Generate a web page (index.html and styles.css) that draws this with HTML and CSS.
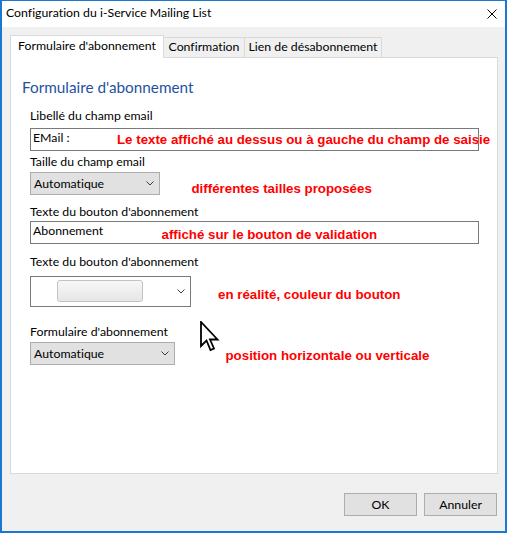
FILE: index.html
```html
<!DOCTYPE html>
<html lang="fr">
<head>
<meta charset="utf-8">
<title>Configuration du i-Service Mailing List</title>
<link rel="stylesheet" href="styles.css">
</head>
<body>
<div class="window">
  <div class="titlebar">
    <span class="title">Configuration du i-Service Mailing List</span>
    <svg class="close" width="10" height="10" viewBox="0 0 10 10"><path d="M0.5 0.5 L9.5 9.5 M9.5 0.5 L0.5 9.5" stroke="#000" stroke-width="1" fill="none"/></svg>
  </div>
  <div class="body">
    <div class="tabs">
      <div class="tab active tab-form">Formulaire d'abonnement</div>
      <div class="tab tab-conf">Confirmation</div>
      <div class="tab tab-lien">Lien de désabonnement</div>
    </div>
    <div class="panel">
      <h1 class="heading">Formulaire d'abonnement</h1>
      <div class="fields">
        <div class="label label-1">Libellé du champ email</div>
        <div class="textbox textbox-1">EMail :</div>
        <div class="label label-2">Taille du champ email</div>
        <div class="select select-1"><span>Automatique</span><svg class="chev" width="8" height="5" viewBox="0 0 8 5"><path d="M0.5 0.5 L4 4 L7.5 0.5" stroke="#3b3b4f" fill="none"/></svg></div>
        <div class="label label-3">Texte du bouton d'abonnement</div>
        <div class="textbox textbox-2">Abonnement</div>
        <div class="label label-4">Texte du bouton d'abonnement</div>
        <div class="combo"><span class="swatch"></span><svg class="chev" width="8" height="5" viewBox="0 0 8 5"><path d="M0.5 0.5 L4 4 L7.5 0.5" stroke="#3b3b4f" fill="none"/></svg></div>
        <div class="label label-5">Formulaire d'abonnement</div>
        <div class="select select-2"><span>Automatique</span><svg class="chev" width="8" height="5" viewBox="0 0 8 5"><path d="M0.5 0.5 L4 4 L7.5 0.5" stroke="#3b3b4f" fill="none"/></svg></div>
      </div>
    </div>
    <div class="footer">
      <button class="btn">OK</button>
      <button class="btn">Annuler</button>
    </div>
  </div>
</div>
<div class="note note-1">Le texte affiché au dessus ou à gauche du champ de saisie</div>
<div class="note note-2">différentes tailles proposées</div>
<div class="note note-3">affiché sur le bouton de validation</div>
<div class="note note-4">en réalité, couleur du bouton</div>
<div class="note note-5">position horizontale ou verticale</div>
<svg class="cursor" width="20" height="31" viewBox="0 0 20 31"><path d="M1 1 L1 25 L6.5 19.5 L10.5 29 L14 27.5 L10 18.5 L17.5 18.5 Z" fill="#fff" stroke="#000" stroke-width="1.8" stroke-linejoin="miter"/></svg>
</body>
</html>
```

FILE: styles.css
```css
html, body {
  margin: 0;
  padding: 0;
}
body {
  position: relative;
  width: 508px;
  height: 533px;
  overflow: hidden;
  background: #ffffff;
  font-family: Lato, "Noto Sans", sans-serif;
  font-size: 12.3px;
  font-variant-ligatures: none;
  color: #000;
}
.window {
  width: 507px;
  height: 533px;
  box-sizing: border-box;
  border: 2px solid #1a78d0;
  border-top-width: 1px;
  display: flex;
  flex-direction: column;
}
.titlebar {
  flex: none;
  height: 26px;
  box-sizing: border-box;
  background: #fff;
  display: flex;
  justify-content: space-between;
  align-items: flex-start;
  padding: 4px 8px 0 4px;
  line-height: 16px;
}
.close {
  margin-top: 4px;
}
.body {
  flex: 1;
  background: #f0f0f0;
  padding: 8px 7px 0 8px;
}
.tabs {
  display: flex;
  align-items: flex-end;
  height: 22px;
}
.tab {
  box-sizing: border-box;
  height: 20px;
  border: 1px solid #d9d9d9;
  border-bottom: none;
  background: #f0f0f0;
  text-align: center;
  line-height: 16px;
  padding-top: 1px;
  margin-left: -1px;
  white-space: nowrap;
}
.tab.active {
  position: relative;
  z-index: 1;
  height: 23px;
  margin-left: 0;
  margin-bottom: -1px;
  padding-top: 2px;
  background: #fff;
}
.tab-form { width: 154px; }
.tab-conf { width: 82px; }
.tab-lien { width: 138px; }
.panel {
  box-sizing: border-box;
  height: 417px;
  background: #fff;
  border: 1px solid #d9d9d9;
  padding: 19px 0 0 11px;
}
.heading {
  margin: 0;
  font-size: 15.3px;
  font-weight: normal;
  line-height: 20px;
  color: #1f51a3;
}
.fields {
  padding-left: 8px;
}
.label {
  line-height: 16px;
  white-space: nowrap;
}
.label-1 { margin-top: 11px; }
.label-2 { margin-top: 3px; }
.label-3 { margin-top: 9px; }
.label-4 { margin-top: 10px; }
.label-5 { margin-top: 17px; }
.textbox {
  box-sizing: border-box;
  width: 449px;
  height: 23px;
  border: 1px solid #7a7a7a;
  background: #fff;
  padding: 1px 2px 0;
  line-height: 16px;
}
.textbox-1 { margin-top: 4px; }
.textbox-2 { margin-top: 1px; }
.select {
  box-sizing: border-box;
  height: 23px;
  margin-top: 2px;
  border: 1px solid #adadad;
  background: #e1e1e1;
  padding: 2.5px 5px 0 3px;
  line-height: 16px;
  display: flex;
  justify-content: space-between;
  align-items: flex-start;
}
.select .chev {
  margin-top: 5px;
}
.select-1 { width: 130px; }
.select-2 { width: 145px; }
.combo {
  box-sizing: border-box;
  width: 161px;
  height: 31px;
  margin-top: 6px;
  border: 1px solid #7a7a7a;
  background: #fff;
  padding: 3px 5px 0 26px;
  display: flex;
  justify-content: space-between;
  align-items: flex-start;
}
.combo .chev {
  margin-top: 9px;
}
.swatch {
  box-sizing: border-box;
  width: 86px;
  height: 22px;
  border: 1px solid #c3c3c3;
  border-radius: 3px;
  background: linear-gradient(#f7f7f7, #e6e6e6);
}
.footer {
  display: flex;
  justify-content: flex-end;
  gap: 7px;
  padding: 19px 1px 0 0;
}
.btn {
  box-sizing: border-box;
  width: 73px;
  height: 23px;
  margin: 0;
  padding: 0;
  border: 1px solid #adadad;
  background: #e1e1e1;
  font: inherit;
  line-height: 16px;
  color: #000;
}
.note {
  position: absolute;
  font-family: "Liberation Sans", Arial, sans-serif;
  font-weight: bold;
  font-size: 13.3px;
  line-height: 15px;
  color: #f00;
  white-space: nowrap;
}
.note-1 { left: 117px; top: 131.5px; }
.note-2 { left: 191.5px; top: 181px; }
.note-3 { left: 161.5px; top: 227px; }
.note-4 { left: 218px; top: 287px; }
.note-5 { left: 225.5px; top: 347.5px; }
.cursor {
  position: absolute;
  left: 200px;
  top: 321px;
}
```
